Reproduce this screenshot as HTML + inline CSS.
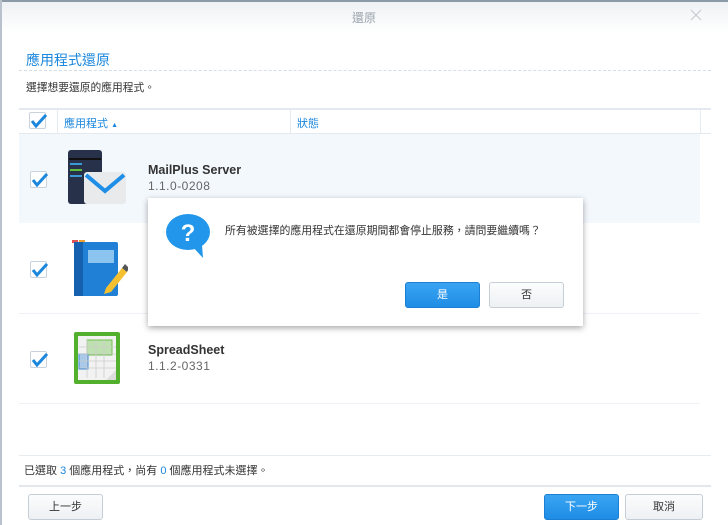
<!DOCTYPE html>
<html><head><meta charset="utf-8"><style>
*{margin:0;padding:0;box-sizing:border-box}
body{width:728px;height:525px;overflow:hidden;background:#fff;font-family:"Liberation Sans","Noto Sans CJK TC",sans-serif;position:relative;color:#333}
.a{position:absolute}
.t{font-size:11px;white-space:nowrap}
.cb{position:absolute;width:17px;height:17px;border:1px solid #c9d3dd;background:#fff;border-radius:2px}
.cb svg{position:absolute;left:0;top:0}
.btn{position:absolute;height:26px;border:1px solid #c5ced7;border-radius:3px;background:linear-gradient(#fbfcfd,#eef1f4);font-size:11px;text-align:center;line-height:24px;color:#333}
.blue{background:linear-gradient(#3aa4f2,#1f8de6);border-color:#1b80d4;color:#fff}
</style></head><body>
<div class="a" style="left:0;top:0;width:728px;height:2px;background:#8c99a6"></div>
<div class="a" style="left:0;top:0;width:2px;height:525px;background:#b9c2cc"></div>
<div class="a" style="left:2px;top:2px;width:726px;height:30px;background:linear-gradient(#eef1f4,#fff)"></div>
<div class="a t" style="left:352px;top:9px;color:#9aa3ad;font-size:12px">還原</div>
<svg class="a" style="left:690px;top:9px" width="12" height="12"><path d="M1 1L11 11M11 1L1 11" stroke="#c5ccd3" stroke-width="1.2"/></svg>
<div class="a" style="left:26px;top:50px;font-size:14px;color:#1a86dc">應用程式還原</div>
<div class="a" style="left:19px;top:70px;width:692px;border-top:1px dashed #d4dde6"></div>
<div class="a t" style="left:26px;top:80px;font-size:10.75px">選擇想要還原的應用程式。</div>
<div class="a" style="left:19px;top:108px;width:692px;height:2px;background:#e3e9ef"></div>
<div class="a" style="left:19px;top:133px;width:692px;height:1px;background:#e3e9ef"></div>
<div class="a" style="left:57px;top:110px;width:1px;height:23px;background:#e6ebf0"></div>
<div class="a" style="left:290px;top:110px;width:1px;height:23px;background:#e6ebf0"></div>
<div class="a" style="left:700px;top:110px;width:1px;height:23px;background:#e6ebf0"></div>
<div class="a t" style="left:64px;top:115px;color:#1a86dc">應用程式 <span style="font-size:7px">▲</span></div>
<div class="a t" style="left:297px;top:115px;color:#1a86dc">狀態</div>
<div class="a" style="left:19px;top:134px;width:681px;height:89px;background:#f3f8fd"></div>
<div class="a" style="left:19px;top:313px;width:681px;height:1px;background:#eef2f6"></div>
<div class="a" style="left:19px;top:403px;width:681px;height:1px;background:#eef2f6"></div>
<div class="cb" style="left:29px;top:112px"><svg width="17" height="17"><path d="M2 8L6 13L16 2" stroke="#1a86dc" stroke-width="3" fill="none"/></svg></div>
<div class="cb" style="left:30px;top:171px"><svg width="17" height="17"><path d="M2 8L6 13L16 2" stroke="#1a86dc" stroke-width="3" fill="none"/></svg></div>
<div class="cb" style="left:30px;top:261px"><svg width="17" height="17"><path d="M2 8L6 13L16 2" stroke="#1a86dc" stroke-width="3" fill="none"/></svg></div>
<div class="cb" style="left:30px;top:351px"><svg width="17" height="17"><path d="M2 8L6 13L16 2" stroke="#1a86dc" stroke-width="3" fill="none"/></svg></div>
<svg class="a" style="left:66px;top:148px" width="62" height="60">
<rect x="2" y="2" width="34" height="54" rx="3" fill="#27324a"/>
<rect x="3" y="10" width="32" height="2" fill="#111"/>
<rect x="4" y="15" width="12" height="2" fill="#3b9ad6"/>
<rect x="4" y="21" width="12" height="2" fill="#5fbf3a"/>
<rect x="4" y="27" width="12" height="2" fill="#3b9ad6"/>
<rect x="18" y="24" width="42" height="32" rx="3" fill="#e8eaec"/>
<path d="M20 27L39 43L58 27" stroke="#1e8ee6" stroke-width="4" fill="none"/>
</svg>
<svg class="a" style="left:70px;top:238px" width="58" height="60">
<rect x="2" y="2" width="6" height="3" fill="#e05252"/><rect x="9" y="2" width="6" height="3" fill="#f0a030"/>
<rect x="4" y="4" width="44" height="54" rx="2" fill="#1f80d6"/>
<rect x="4" y="4" width="9" height="54" fill="#1660b0"/>
<rect x="18" y="12" width="26" height="13" fill="#8cc4f0"/>
<path d="M36 50L52 30L57 34L41 54L34 56Z" fill="#f5c030"/>
<path d="M52 30L55 26L59 30L57 34Z" fill="#555"/>
</svg>
<svg class="a" style="left:72px;top:330px" width="50" height="56">
<rect x="2" y="2" width="46" height="52" rx="2" fill="#52b02c"/>
<rect x="6" y="6" width="38" height="44" fill="#f2f2f2"/>
<rect x="15" y="10" width="25" height="15" fill="#bfe0b0" stroke="#6cbf4a"/>
<rect x="7" y="24" width="9" height="15" fill="#aac8e8" stroke="#3b8ad6"/>
<path d="M7 17H44M7 24H44M7 31H44M7 38H44M15 10V48M24 10V48M32 10V48" stroke="#ccc" stroke-width=".8"/>
<path d="M34 50L44 40V50Z" fill="#ddd"/>
</svg>
<div class="a" style="left:148px;top:163px;font-size:12.5px;font-weight:bold;color:#333">MailPlus Server</div>
<div class="a" style="left:148px;top:179px;font-size:12px;color:#666;letter-spacing:.5px">1.1.0-0208</div>
<div class="a" style="left:148px;top:343px;font-size:12.5px;font-weight:bold;color:#333">SpreadSheet</div>
<div class="a" style="left:148px;top:359px;font-size:12px;color:#666;letter-spacing:.5px">1.1.2-0331</div>
<div class="a" style="left:19px;top:455px;width:692px;height:1px;background:#e6ebf0"></div>
<div class="a t" style="left:24px;top:462px">已選取 <span style="color:#1a86dc">3</span> 個應用程式，尚有 <span style="color:#1a86dc">0</span> 個應用程式未選擇。</div>
<div class="a" style="left:19px;top:485px;width:692px;height:2px;background:#e3e7eb"></div>
<div class="btn" style="left:28px;top:494px;width:75px">上一步</div>
<div class="btn blue" style="left:544px;top:494px;width:75px">下一步</div>
<div class="btn" style="left:625px;top:494px;width:78px">取消</div>
<div class="a" style="left:148px;top:198px;width:435px;height:128px;background:#fff;box-shadow:0 2px 6px rgba(0,0,0,.35)"></div>
<svg class="a" style="left:164px;top:212px" width="50" height="48">
<ellipse cx="24" cy="20" rx="22" ry="18" fill="#2196ea"/>
<path d="M28 34L39 46L38 33Z" fill="#2196ea"/>
<text x="24" y="29" font-family="Liberation Sans" font-weight="bold" font-size="24" fill="#fff" text-anchor="middle">?</text>
</svg>
<div class="a t" style="left:225px;top:222px;font-size:10.9px">所有被選擇的應用程式在還原期間都會停止服務，請問要繼續嗎？</div>
<div class="btn blue" style="left:405px;top:282px;width:75px">是</div>
<div class="btn" style="left:489px;top:282px;width:75px">否</div>
</body></html>
